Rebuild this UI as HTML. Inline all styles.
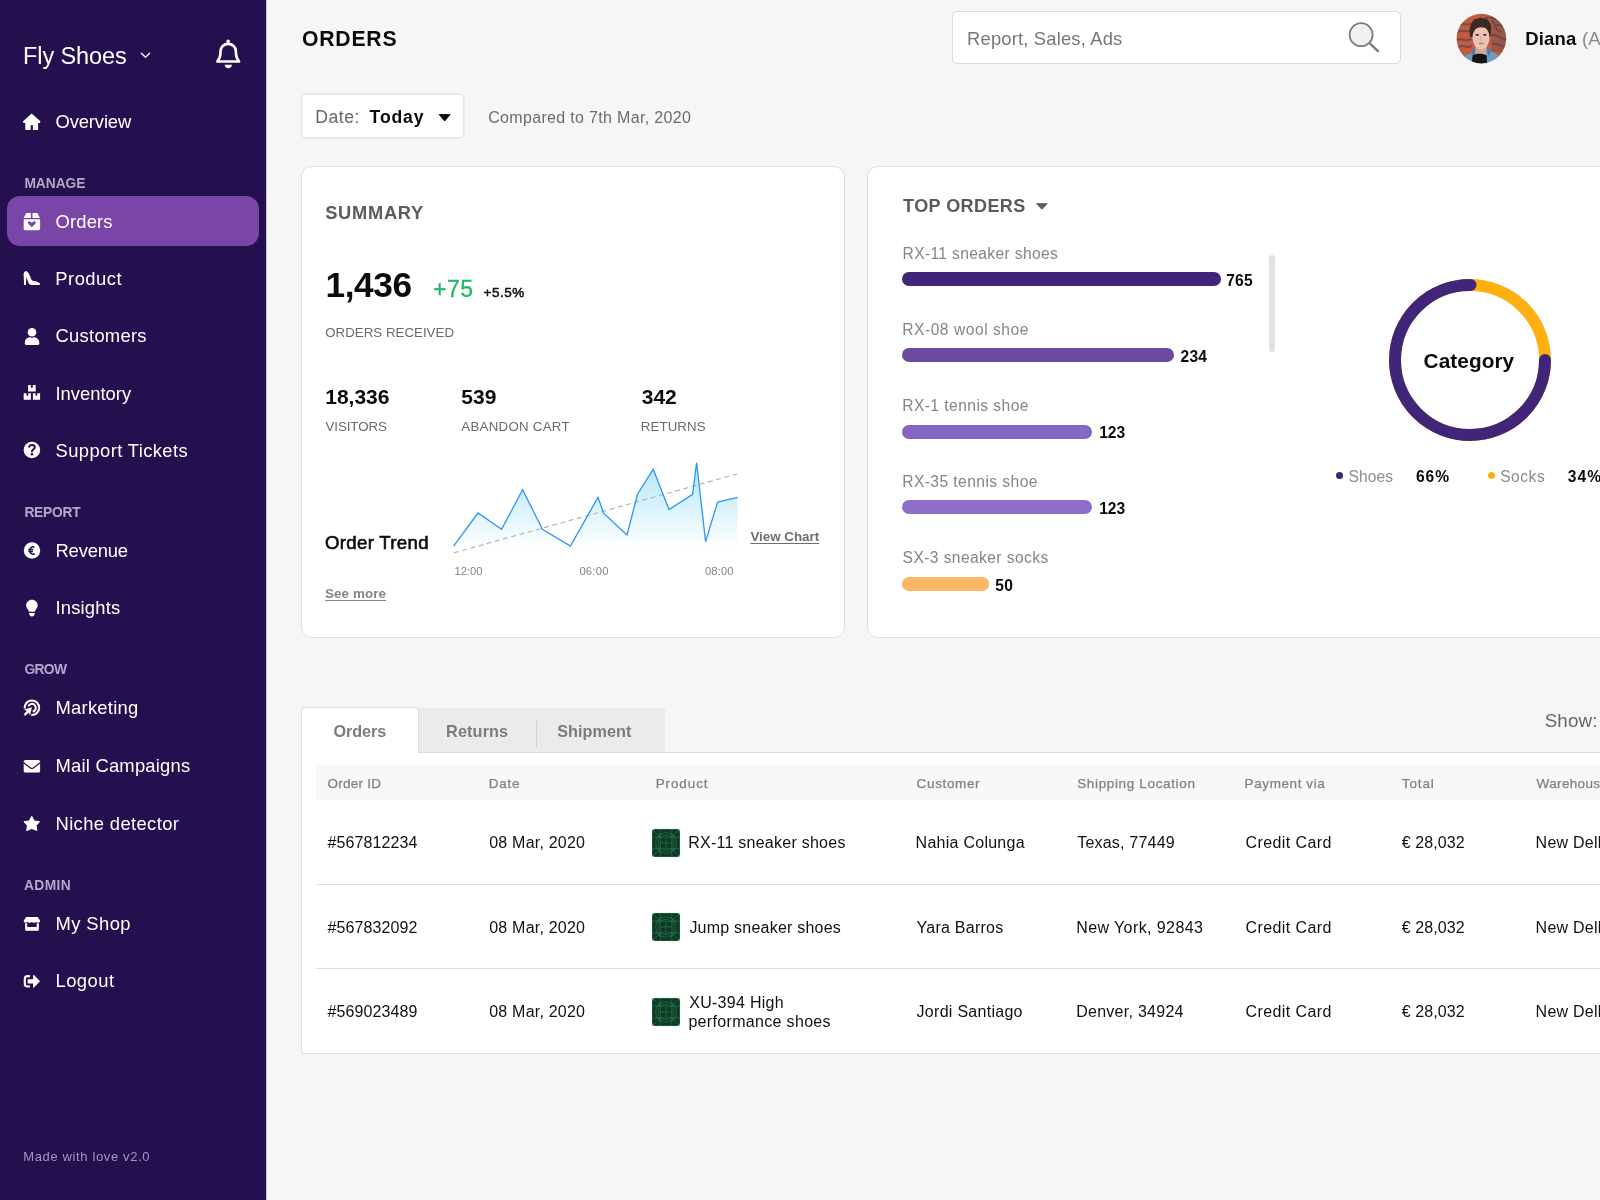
<!DOCTYPE html>
<html>
<head>
<meta charset="utf-8">
<title>Orders</title>
<style>
*{box-sizing:border-box;margin:0;padding:0}
html,body{width:1600px;height:1200px;overflow:hidden}
body{background:#f5f7f6;font-family:"Liberation Sans",sans-serif;color:#111;position:relative}
.a{position:absolute;white-space:nowrap}
.card{position:absolute;background:#fff;border:1px solid #e0e0e0;border-radius:11px}
svg{position:absolute}
</style>
</head>
<body>
<!-- SIDEBAR -->
<div class="a" style="left:0;top:0;width:266px;height:1200px;background:#25104f"></div><div class="a" style="left:266px;top:0;width:1px;height:1200px;background:#25104f;opacity:.22"></div>
<div class="a" style="left:7px;top:196px;width:252px;height:50px;border-radius:13px;background:#7946a8"></div>
<svg style="left:0;top:0" width="266" height="1200" viewBox="0 0 266 1200" fill="#fff">
<!-- chevron -->
<path d="M141.300 53.200L145.500 57.300L149.700 53.200" fill="none" stroke="#fff" stroke-width="1.300" stroke-linecap="round" stroke-linejoin="round"/>
<!-- bell -->
<path d="M217.300 61.500C219 59.500 220.400 57.500 220.500 53L220.500 51.500C220.500 47 224 43.900 228.200 43.900C232.400 43.900 235.900 47 235.900 51.500L235.900 53C236 57.500 237.400 59.500 239.100 61.500Z" fill="none" stroke="#fff" stroke-width="2.600" stroke-linejoin="round"/>
<circle cx="228.200" cy="41.300" r="1.800"/>
<path d="M224.600 64.800C224.900 67 226.300 68.300 228.300 68.300C230.300 68.300 231.700 67 232 64.800Z"/>
<!-- home -->
<path d="M31.700 113.600L40.400 121.300L40 123L38.100 123L38.100 130L32.900 130L32.900 125.300L30.700 125.300L30.700 130L25.300 130L25.300 123L23.400 123L23 121.300Z"/>
<!-- orders box -->
<path d="M26.300 213L30.900 213L30.900 218.100L23.700 218.100ZM32.500 213L37.300 213L40 218.100L32.500 218.100Z"/>
<path d="M23.700 219.200H40.100V229C40.100 229.700 39.600 230.200 38.900 230.200H24.900C24.200 230.200 23.700 229.700 23.700 229Z"/>
<path d="M31.800 227.300L28.300 223.800C27.200 222.300 28.600 220.800 30.100 221.400C30.900 221.700 31.400 222.300 31.800 222.900C32.200 222.300 32.700 221.700 33.500 221.400C35 220.800 36.400 222.300 35.300 223.800Z" fill="#7946a8"/>
<!-- heel -->
<path d="M26.100 270.900C27.500 271.400 28.600 272.900 29.300 274.500L31.300 279.300C31.800 280.400 32.600 280.800 34 280.900C36.500 281.100 38.600 282.200 40.200 283.500C40.300 284.300 39.800 284.900 39 284.900L31.500 284.900C30 284.900 29 284.100 28.400 282.700L26.300 276.900L25.900 285L24.100 285L23.600 273.700C23.900 272.300 25 271.200 26.100 270.900Z"/>
<!-- user -->
<circle cx="32" cy="332.300" r="4.300"/>
<path d="M24.800 342.800C24.800 339.500 27 337.200 30 337.200C30.600 337.200 31.200 337.900 32 337.900C32.800 337.900 33.400 337.200 34 337.200C37 337.200 39.300 339.500 39.300 342.800L39.300 343.600C39.300 344.400 38.700 345 37.900 345L26.200 345C25.400 345 24.800 344.400 24.800 343.600Z"/>
<!-- boxes -->
<path d="M28.100 385.100H30.900V387.700H32.800V385.100H35.700V391.400H28.100Z"/>
<path d="M23.700 393.300H26.500V395.700H28.200V393.300H30.900V399.800H23.700Z"/>
<path d="M32.900 393.300H35.600V395.700H37.300V393.300H40.100V399.800H32.900Z"/>
<!-- question -->
<circle cx="31.900" cy="450" r="8.300"/>
<path d="M29.100 446.700C29.700 445.600 30.700 445.100 32 445.100C33.600 445.100 34.800 446.100 34.800 447.500C34.800 449.300 31.900 449.500 31.900 451.500" fill="none" stroke="#25104f" stroke-width="2" stroke-linecap="round"/>
<circle cx="31.900" cy="454.200" r="1.300" fill="#25104f"/>
<!-- euro -->
<circle cx="32" cy="550.500" r="8.200"/>
<path d="M34.500 547.300C32 546 29.900 547.600 29.900 550.500C29.900 553.400 32 555 34.700 553.700M28.300 549.500H33.300M28.300 551.500H32.900" fill="none" stroke="#25104f" stroke-width="1.500"/>
<!-- bulb -->
<path d="M31.900 599.700C35.100 599.700 37.700 602.200 37.700 605.300C37.700 607.800 35.600 609.300 34.700 611.800L29.100 611.800C28.200 609.300 26.100 607.800 26.100 605.300C26.100 602.200 28.700 599.700 31.900 599.700Z"/>
<path d="M29.100 613.100H34.700C34.700 615.300 33.500 616.600 31.900 616.600C30.300 616.600 29.100 615.300 29.100 613.100Z"/>
<!-- bullseye -->
<path d="M24.660 708.500A7.250 7.250 0 1 1 31.300 715" fill="none" stroke="#fff" stroke-width="2.100"/>
<path d="M28.300 706.300A3.900 3.900 0 1 1 32.700 711.600" fill="none" stroke="#fff" stroke-width="2"/>
<path d="M32 707.200L24.200 709.500L26.800 711L23.600 714.200L25.300 715.900L28.500 712.700L30 715.300Z"/>
<!-- mail -->
<rect x="23.700" y="759.900" width="16.400" height="12.700" rx="1.700"/>
<path d="M23.200 762.500L30.600 768C31.500 768.600 32.300 768.600 33.200 768L40.600 762.500" fill="none" stroke="#25104f" stroke-width="1.300"/>
<!-- star -->
<path d="M31.750 816.300L34.200 820.900L39.500 821.700L36.100 825.600L36.800 830.500L31.750 828.500L26.700 830.500L27.400 825.600L24 821.700L29.300 820.900Z" stroke="#fff" stroke-width="1" stroke-linejoin="round"/>
<!-- shop -->
<path d="M26.100 917H37.800L40.100 920.800C40.100 922 39.300 922.800 38.200 922.800C37.300 922.800 36.600 922.300 36.200 921.700C35.800 922.300 35.100 922.800 34.100 922.800C33.100 922.800 32.300 922.300 31.900 921.700C31.500 922.300 30.700 922.800 29.700 922.800C28.700 922.800 28 922.300 27.600 921.700C27.200 922.300 26.500 922.800 25.600 922.800C24.500 922.800 23.700 922 23.700 920.800Z"/>
<path d="M25.100 923.300H27.200V927H36.700V923.300H38.900V929.600C38.900 930.200 38.400 930.700 37.800 930.700H26.200C25.600 930.700 25.100 930.200 25.100 929.600Z"/>
<!-- logout -->
<path d="M30 976.100H27.500C26 976.100 24.800 977.300 24.800 978.800V983.800C24.800 985.300 26 986.500 27.500 986.500H30" fill="none" stroke="#fff" stroke-width="2.100" stroke-linecap="butt"/>
<path d="M27.700 979.200H33.100V975.400C33.100 974.900 33.600 974.700 34 975.100L40.100 981.300L34 987.600C33.600 988 33.100 987.800 33.100 987.300V983.600H27.700Z"/>
</svg>

<!-- HEADER -->
<div class="a" style="left:952px;top:11px;width:449px;height:53px;background:#fff;border:1px solid #dcdcdc;border-radius:5px"></div>
<svg class="a" style="left:1345px;top:20px" width="40" height="36" viewBox="0 0 40 36"><path d="M24.300 22.800L33.700 31.800" stroke="#7b7b7b" stroke-width="2.300"/><circle cx="16.100" cy="14.700" r="11.500" fill="#f0f0f0" stroke="#7b7b7b" stroke-width="1.800"/></svg>

<svg class="a" style="left:1456px;top:13px" width="51" height="51" viewBox="0 0 51 51">
<defs><clipPath id="av"><circle cx="25.400" cy="25.600" r="24.800"/></clipPath><filter id="bl" x="-10%" y="-10%" width="120%" height="120%"><feGaussianBlur stdDeviation=".55"/></filter></defs>
<g clip-path="url(#av)"><g filter="url(#bl)">
<rect x="-2" y="-2" width="55" height="55" fill="#c05c43"/>
<rect x="35" y="3" width="18" height="36" fill="#7d5249" opacity=".55"/>
<g fill="none" stroke="#5b4744" stroke-width="2" opacity=".75" stroke-linecap="round">
<path d="M2 19C7 15 11 21 15 17M1 27C6 24 10 30 15 26M3 34C8 31 11 36 15 33M5 12C9 9 12 13 15 11"/>
<path d="M36 8C41 12 38 17 45 19M36 22C42 20 44 28 50 26M37 31C41 29 45 35 49 33M39 13C43 9 46 15 50 13M30 5C34 3 37 7 41 5"/>
</g>
<path d="M14 24C12.500 13 16 5.500 22 5.500C23 4.500 26 4.800 27.500 5.500C33 5 36 11 35 19L34.300 24Z" fill="#3a2925"/>
<path d="M5 52C5.500 44 10 41.500 16 40L18 33.500L24.500 42L32 34L34.500 38C40 39.500 45 43 46 52Z" fill="#6c9cc0"/>
<path d="M16 40L18 33.500L20 36L17.500 42ZM32 34L34.500 38L33 44L30.500 37Z" fill="#4f7c9f"/>
<rect x="19.500" y="33" width="11" height="9" fill="#d9a893"/>
<path d="M15.800 52L16.500 42.500C19 40.200 28 40.200 30.700 42.500L31.200 52Z" fill="#161618"/>
<ellipse cx="25" cy="24.600" rx="8.500" ry="11.800" fill="#ebc3b3"/>
<path d="M16.500 22C15.500 13 19 9.500 24 10C29 9 34 12.500 33.600 21C32.500 16.500 29.500 14 26 14.500C21.500 13.500 18 16.500 16.500 22Z" fill="#3a2925"/>
<ellipse cx="21.200" cy="21.800" rx="2" ry=".9" fill="#3b2b2b"/><ellipse cx="28.800" cy="21.800" rx="2" ry=".9" fill="#3b2b2b"/>
<path d="M24.500 22.500L24 27.300L26 27.300" fill="none" stroke="#d3a08f" stroke-width=".8"/>
<ellipse cx="25.300" cy="30.400" rx="2.800" ry="1" fill="#c48378"/>
</g></g></svg>


<!-- DATE FILTER -->
<svg style="left:299px;top:91px" width="170" height="50" viewBox="299 91 170 50"><rect x="301.750" y="94" width="162.150" height="44" rx="4.500" fill="#fff" stroke="#dadada" stroke-width="1"/></svg>
<svg style="left:436px;top:112px" width="18" height="12" viewBox="436 112 18 12"><path d="M439.300 114.600H450L444.650 121Z" fill="#0b0b0b" stroke="#0b0b0b" stroke-width="1" stroke-linejoin="round"/></svg>

<!-- SUMMARY CARD -->
<div class="card" style="left:301px;top:166px;width:543.700px;height:472px"></div>
<svg class="a" style="left:440px;top:450px" width="320" height="110" viewBox="440 450 320 110">
<defs><linearGradient id="cg" x1="0" y1="0" x2="0" y2="1"><stop offset="0" stop-color="#b2e5f9"/><stop offset="1" stop-color="#ffffff"/></linearGradient></defs>
<path d="M453.6 546.2L478 513L501.6 529.4L522.6 489.6L542.4 529.4L570.4 546L598 497.4L603.6 513.2L627 535L637.6 494L653.2 469.2L669 509.6L692.6 494.4L696.6 462.6L705.6 541.6L717.6 502L737.6 497.4L737.6 548L453.6 548Z" fill="url(#cg)"/>
<path d="M454 552.8L737 474" stroke="#b0b0b0" stroke-width="1.100" stroke-dasharray="5 3.5" fill="none"/>
<path d="M453.6 546.2L478 513L501.6 529.4L522.6 489.6L542.4 529.4L570.4 546L598 497.4L603.6 513.2L627 535L637.6 494L653.2 469.2L669 509.6L692.6 494.4L696.6 462.6L705.6 541.6L717.6 502L737.6 497.4" stroke="#2d96f3" stroke-width="1.3" fill="none" stroke-linejoin="miter"/>
</svg>

<!-- TOP ORDERS CARD -->
<div class="card" style="left:867px;top:166px;width:800px;height:472px"></div>
<svg style="left:1034px;top:201px" width="16" height="12" viewBox="1034 201 16 12"><path d="M1036.600 203.700H1047.200L1041.900 209.300Z" fill="#5e5e5e" stroke="#5e5e5e" stroke-width="1" stroke-linejoin="round"/></svg>
<div class="a" style="left:902px;top:272px;width:319.3px;height:14px;border-radius:7px;background:#402579"></div>
<div class="a" style="left:902px;top:348.4px;width:272.3px;height:14px;border-radius:7px;background:#6b4ba0"></div>
<div class="a" style="left:902px;top:424.6px;width:190.4px;height:14px;border-radius:7px;background:#8566c3"></div>
<div class="a" style="left:902px;top:500.4px;width:190.4px;height:14px;border-radius:7px;background:#8d6fcb"></div>
<div class="a" style="left:902px;top:576.6px;width:87.3px;height:14px;border-radius:7px;background:#fbb766"></div>
<div class="a" style="left:1268.500px;top:255px;width:6.200px;height:97px;border-radius:3.100px;background:#e2e2e2"></div>
<svg class="a" style="left:1378.500px;top:268.700px" width="182" height="182" viewBox="-91 -91 182 182">
<circle cx="0" cy="0" r="75" fill="none" stroke="#fdb00f" stroke-width="12"/>
<path d="M75 0A75 75 0 1 1 0.500 -75" fill="none" stroke="#402579" stroke-width="12" stroke-linecap="round"/>
</svg>
<div class="a" style="left:1336.200px;top:472.100px;width:7px;height:7px;border-radius:50%;background:#402579"></div>
<div class="a" style="left:1487.800px;top:472.100px;width:7px;height:7px;border-radius:50%;background:#fdb014"></div>

<!-- TABLE -->
<div class="a" style="left:301px;top:752px;width:1400px;height:302px;background:#fff;border:1px solid #dfdfdf;border-top:none;border-radius:0 0 0 3px"></div>
<div class="a" style="left:301px;top:752px;width:1400px;height:1px;background:#dcdcdc"></div>
<div class="a" style="left:418px;top:708px;width:246.500px;height:44px;background:#ebebeb"></div>
<div class="a" style="left:301px;top:707px;width:118px;height:46px;background:#fff;border:1px solid #dfdfdf;border-bottom:none;border-radius:4px 4px 0 0"></div>
<div class="a" style="left:536px;top:721px;width:1px;height:27px;background:#d2d2d2"></div>
<div class="a" style="left:315.500px;top:765px;width:1300px;height:35px;background:#f8f8f8"></div>
<div class="a" style="left:315.500px;top:883.500px;width:1300px;height:1px;background:#dedede"></div>
<div class="a" style="left:315.500px;top:968px;width:1300px;height:1px;background:#dedede"></div>
<svg class="a" style="left:651px;top:827.5px" width="30" height="30" viewBox="-15 -15 30 30"><rect x="-14" y="-14" width="28" height="28" rx="3.200" fill="#0f3a1e"/><g fill="none" stroke="#48b5ab" stroke-width=".5" opacity=".6"><rect x="-13.750" y="-13.750" width="27.500" height="27.500" rx="3"/><circle r="10.300"/><circle r="7.800"/><path d="M-14 -14L-5.800 -5.800M14 -14L5.800 -5.800M-14 14L-5.800 5.800M14 14L5.800 5.800M-5.800 -14V14M5.800 -14V14M-14 -5.800H14M-14 5.800H14M0 -5.800V5.800M-5.800 0H5.800M-10.300 -4.300L-4.300 -10.300M10.300 -4.300L4.300 -10.300M-10.300 4.300L-4.300 10.300M10.300 4.300L4.300 10.300"/></g></svg><svg class="a" style="left:651px;top:912px" width="30" height="30" viewBox="-15 -15 30 30"><rect x="-14" y="-14" width="28" height="28" rx="3.200" fill="#0f3a1e"/><g fill="none" stroke="#48b5ab" stroke-width=".5" opacity=".6"><rect x="-13.750" y="-13.750" width="27.500" height="27.500" rx="3"/><circle r="10.300"/><circle r="7.800"/><path d="M-14 -14L-5.800 -5.800M14 -14L5.800 -5.800M-14 14L-5.800 5.800M14 14L5.800 5.800M-5.800 -14V14M5.800 -14V14M-14 -5.800H14M-14 5.800H14M0 -5.800V5.800M-5.800 0H5.800M-10.300 -4.300L-4.300 -10.300M10.300 -4.300L4.300 -10.300M-10.300 4.300L-4.300 10.300M10.300 4.300L4.300 10.300"/></g></svg><svg class="a" style="left:651px;top:996.5px" width="30" height="30" viewBox="-15 -15 30 30"><rect x="-14" y="-14" width="28" height="28" rx="3.200" fill="#0f3a1e"/><g fill="none" stroke="#48b5ab" stroke-width=".5" opacity=".6"><rect x="-13.750" y="-13.750" width="27.500" height="27.500" rx="3"/><circle r="10.300"/><circle r="7.800"/><path d="M-14 -14L-5.800 -5.800M14 -14L5.800 -5.800M-14 14L-5.800 5.800M14 14L5.800 5.800M-5.800 -14V14M5.800 -14V14M-14 -5.800H14M-14 5.800H14M0 -5.800V5.800M-5.800 0H5.800M-10.300 -4.300L-4.300 -10.300M10.300 -4.300L4.300 -10.300M-10.300 4.300L-4.300 10.300M10.300 4.300L4.300 10.300"/></g></svg>

<!-- TEXT -->
<div style="position:absolute;left:0;top:0;width:1600px;height:1200px;will-change:transform">
<div class="a" style="left:23.10px;top:43px;font-size:23.5px;line-height:26px;color:#fff;letter-spacing:-0.117px">Fly Shoes</div>
<div class="a" style="left:55.60px;top:111px;font-size:18.4px;line-height:21px;color:#fff;letter-spacing:-0.152px">Overview</div>
<div class="a" style="left:55.60px;top:211px;font-size:18.4px;line-height:21px;color:#fff;letter-spacing:0.128px">Orders</div>
<div class="a" style="left:55.25px;top:268px;font-size:18.4px;line-height:21px;color:#fff;letter-spacing:0.497px">Product</div>
<div class="a" style="left:55.60px;top:325px;font-size:18.4px;line-height:21px;color:#fff;letter-spacing:0.242px">Customers</div>
<div class="a" style="left:55.50px;top:383px;font-size:18.4px;line-height:21px;color:#fff;letter-spacing:-0.006px">Inventory</div>
<div class="a" style="left:55.60px;top:440px;font-size:18.4px;line-height:21px;color:#fff;letter-spacing:0.376px">Support Tickets</div>
<div class="a" style="left:55.50px;top:540px;font-size:18.4px;line-height:21px;color:#fff;letter-spacing:-0.190px">Revenue</div>
<div class="a" style="left:55.50px;top:597px;font-size:18.4px;line-height:21px;color:#fff;letter-spacing:0.188px">Insights</div>
<div class="a" style="left:55.50px;top:697px;font-size:18.4px;line-height:21px;color:#fff;letter-spacing:0.248px">Marketing</div>
<div class="a" style="left:55.50px;top:755px;font-size:18.4px;line-height:21px;color:#fff;letter-spacing:0.219px">Mail Campaigns</div>
<div class="a" style="left:55.50px;top:813px;font-size:18.4px;line-height:21px;color:#fff;letter-spacing:0.369px">Niche detector</div>
<div class="a" style="left:55.50px;top:913px;font-size:18.4px;line-height:21px;color:#fff;letter-spacing:0.409px">My Shop</div>
<div class="a" style="left:55.50px;top:970px;font-size:18.4px;line-height:21px;color:#fff;letter-spacing:0.452px">Logout</div>
<div class="a" style="left:24.40px;top:176px;font-size:13.8px;line-height:15px;color:#b3a7cb;font-weight:bold;letter-spacing:-0.053px">MANAGE</div>
<div class="a" style="left:24.40px;top:505px;font-size:13.8px;line-height:15px;color:#b3a7cb;font-weight:bold;letter-spacing:-0.243px">REPORT</div>
<div class="a" style="left:24.40px;top:662px;font-size:13.8px;line-height:15px;color:#b3a7cb;font-weight:bold;letter-spacing:-0.609px">GROW</div>
<div class="a" style="left:24.00px;top:878px;font-size:13.8px;line-height:15px;color:#b3a7cb;font-weight:bold;letter-spacing:0.387px">ADMIN</div>
<div class="a" style="left:23.20px;top:1149px;font-size:13px;line-height:15px;color:#a396bf;letter-spacing:0.635px">Made with love v2.0</div>
<div class="a" style="left:301.90px;top:27px;font-size:21.2px;line-height:23px;color:#0b0b0b;font-weight:bold;letter-spacing:0.817px">ORDERS</div>
<div class="a" style="left:967.10px;top:28px;font-size:18.4px;line-height:21px;color:#777;letter-spacing:0.169px">Report, Sales, Ads</div>
<div class="a" style="left:1525.30px;top:28px;font-size:18.5px;line-height:21px;color:#0b0b0b;font-weight:bold;letter-spacing:0.153px">Diana</div>
<div class="a" style="left:1582.00px;top:28px;font-size:18.5px;line-height:21px;color:#8a8a8a">(Admin)</div>
<div class="a" style="left:315.25px;top:107px;font-size:17.6px;line-height:20px;color:#666;letter-spacing:0.522px">Date:</div>
<div class="a" style="left:369.60px;top:107px;font-size:17.6px;line-height:20px;color:#0b0b0b;font-weight:bold;letter-spacing:0.858px">Today</div>
<div class="a" style="left:488.20px;top:109px;font-size:16px;line-height:17px;color:#6b6b6b;letter-spacing:0.330px">Compared to 7th Mar, 2020</div>
<div class="a" style="left:325.20px;top:202px;font-size:18.3px;line-height:21px;color:#5c5c5c;font-weight:bold;letter-spacing:0.720px">SUMMARY</div>
<div class="a" style="left:325.60px;top:265px;font-size:35.3px;line-height:39px;color:#0b0b0b;font-weight:bold;letter-spacing:-0.474px">1,436</div>
<div class="a" style="left:433.10px;top:276px;font-size:23px;line-height:26px;color:#1fb864;letter-spacing:0.488px;-webkit-text-stroke:.3px #1fb864">+75</div>
<div class="a" style="left:483.60px;top:285px;font-size:13.5px;line-height:15px;color:#111;letter-spacing:0.487px;-webkit-text-stroke:.5px #111">+5.5%</div>
<div class="a" style="left:325.20px;top:325px;font-size:13.3px;line-height:15px;color:#6a6a6a;letter-spacing:0.017px">ORDERS RECEIVED</div>
<div class="a" style="left:325.25px;top:385px;font-size:21px;line-height:23px;color:#0b0b0b;font-weight:bold;letter-spacing:-0.010px">18,336</div>
<div class="a" style="left:461.25px;top:385px;font-size:21px;line-height:23px;color:#0b0b0b;font-weight:bold;letter-spacing:0.071px">539</div>
<div class="a" style="left:641.75px;top:385px;font-size:21px;line-height:23px;color:#0b0b0b;font-weight:bold;letter-spacing:-0.054px">342</div>
<div class="a" style="left:325.50px;top:419px;font-size:13.3px;line-height:15px;color:#6a6a6a;letter-spacing:-0.065px">VISITORS</div>
<div class="a" style="left:461.25px;top:419px;font-size:13.3px;line-height:15px;color:#6a6a6a;letter-spacing:0.270px">ABANDON CART</div>
<div class="a" style="left:640.75px;top:419px;font-size:13.3px;line-height:15px;color:#6a6a6a;letter-spacing:0.100px">RETURNS</div>
<div class="a" style="left:325.00px;top:532px;font-size:18.6px;line-height:21px;color:#0b0b0b;letter-spacing:0.326px;-webkit-text-stroke:.6px #0b0b0b">Order Trend</div>
<div class="a" style="left:454.40px;top:565px;font-size:11.2px;line-height:12px;color:#858585;letter-spacing:0.019px">12:00</div>
<div class="a" style="left:579.40px;top:565px;font-size:11.2px;line-height:12px;color:#858585;letter-spacing:0.256px">06:00</div>
<div class="a" style="left:704.90px;top:565px;font-size:11.2px;line-height:12px;color:#858585;letter-spacing:0.156px">08:00</div>
<div class="a" style="left:750.40px;top:529px;font-size:13.4px;line-height:15px;color:#6e6e6e;font-weight:bold;letter-spacing:-0.017px;text-decoration:underline;text-underline-offset:1.5px;text-decoration-thickness:1.2px">View Chart</div>
<div class="a" style="left:325.00px;top:586px;font-size:13.4px;line-height:15px;color:#858585;font-weight:bold;letter-spacing:0.108px;text-decoration:underline;text-underline-offset:1.5px;text-decoration-thickness:1.2px">See more</div>
<div class="a" style="left:903.10px;top:196px;font-size:18px;line-height:20px;color:#5a5a5a;font-weight:bold;letter-spacing:0.424px">TOP ORDERS</div>
<div class="a" style="left:902.50px;top:245px;font-size:15.6px;line-height:17px;color:#858585;letter-spacing:0.367px">RX-11 sneaker shoes</div>
<div class="a" style="left:902.20px;top:321px;font-size:15.6px;line-height:17px;color:#858585;letter-spacing:0.537px">RX-08 wool shoe</div>
<div class="a" style="left:902.20px;top:397px;font-size:15.6px;line-height:17px;color:#858585;letter-spacing:0.444px">RX-1 tennis shoe</div>
<div class="a" style="left:902.20px;top:473px;font-size:15.6px;line-height:17px;color:#858585;letter-spacing:0.436px">RX-35 tennis shoe</div>
<div class="a" style="left:902.60px;top:549px;font-size:15.6px;line-height:17px;color:#858585;letter-spacing:0.408px">SX-3 sneaker socks</div>
<div class="a" style="left:1226.25px;top:272px;font-size:15.6px;line-height:17px;color:#0b0b0b;font-weight:bold;letter-spacing:0.152px">765</div>
<div class="a" style="left:1180.60px;top:348px;font-size:15.6px;line-height:17px;color:#0b0b0b;font-weight:bold;letter-spacing:0.152px">234</div>
<div class="a" style="left:1099.30px;top:424px;font-size:15.6px;line-height:17px;color:#0b0b0b;font-weight:bold;letter-spacing:-0.123px">123</div>
<div class="a" style="left:1099.30px;top:500px;font-size:15.6px;line-height:17px;color:#0b0b0b;font-weight:bold;letter-spacing:-0.123px">123</div>
<div class="a" style="left:995.30px;top:577px;font-size:15.6px;line-height:17px;color:#0b0b0b;font-weight:bold;letter-spacing:0.227px">50</div>
<div class="a" style="left:1423.60px;top:349px;font-size:20.8px;line-height:23px;color:#0b0b0b;font-weight:bold;letter-spacing:0.060px">Category</div>
<div class="a" style="left:1348.50px;top:468px;font-size:15.6px;line-height:17px;color:#8c8c8c;letter-spacing:0.095px">Shoes</div>
<div class="a" style="left:1415.90px;top:468px;font-size:15.6px;line-height:17px;color:#0b0b0b;font-weight:bold;letter-spacing:1.027px">66%</div>
<div class="a" style="left:1500.20px;top:468px;font-size:15.6px;line-height:17px;color:#8c8c8c;letter-spacing:0.508px">Socks</div>
<div class="a" style="left:1567.80px;top:468px;font-size:15.6px;line-height:17px;color:#0b0b0b;font-weight:bold;letter-spacing:1.027px">34%</div>
<div class="a" style="left:333.50px;top:722px;font-size:16.2px;line-height:18px;color:#7c7c7c;font-weight:bold;letter-spacing:-0.076px">Orders</div>
<div class="a" style="left:446.10px;top:722px;font-size:16.2px;line-height:18px;color:#7c7c7c;font-weight:bold;letter-spacing:0.140px">Returns</div>
<div class="a" style="left:557.20px;top:722px;font-size:16.2px;line-height:18px;color:#7c7c7c;font-weight:bold;letter-spacing:0.049px">Shipment</div>
<div class="a" style="left:1544.70px;top:710px;font-size:18.8px;line-height:21px;color:#666;letter-spacing:0.130px">Show:</div>
<div class="a" style="left:327.50px;top:776px;font-size:13.5px;line-height:15px;color:#808080;letter-spacing:0.249px;-webkit-text-stroke:.25px #808080">Order ID</div>
<div class="a" style="left:488.75px;top:776px;font-size:13.5px;line-height:15px;color:#808080;letter-spacing:0.747px;-webkit-text-stroke:.25px #808080">Date</div>
<div class="a" style="left:655.70px;top:776px;font-size:13.5px;line-height:15px;color:#808080;letter-spacing:0.888px;-webkit-text-stroke:.25px #808080">Product</div>
<div class="a" style="left:916.60px;top:776px;font-size:13.5px;line-height:15px;color:#808080;letter-spacing:0.640px;-webkit-text-stroke:.25px #808080">Customer</div>
<div class="a" style="left:1077.20px;top:776px;font-size:13.5px;line-height:15px;color:#808080;letter-spacing:0.648px;-webkit-text-stroke:.25px #808080">Shipping Location</div>
<div class="a" style="left:1244.60px;top:776px;font-size:13.5px;line-height:15px;color:#808080;letter-spacing:0.593px;-webkit-text-stroke:.25px #808080">Payment via</div>
<div class="a" style="left:1401.80px;top:776px;font-size:13.5px;line-height:15px;color:#808080;letter-spacing:0.858px;-webkit-text-stroke:.25px #808080">Total</div>
<div class="a" style="left:1536.60px;top:776px;font-size:13.5px;line-height:15px;color:#808080;-webkit-text-stroke:.25px #808080;letter-spacing:.35px">Warehouse</div>
<div class="a" style="left:327.50px;top:834px;font-size:16px;line-height:17px;color:#111;letter-spacing:0.102px">#567812234</div>
<div class="a" style="left:489.20px;top:834px;font-size:16px;line-height:17px;color:#111;letter-spacing:0.218px">08 Mar, 2020</div>
<div class="a" style="left:915.60px;top:834px;font-size:16px;line-height:17px;color:#111;letter-spacing:0.262px">Nahia Colunga</div>
<div class="a" style="left:1077.20px;top:834px;font-size:16px;line-height:17px;color:#111;letter-spacing:0.206px">Texas, 77449</div>
<div class="a" style="left:1245.60px;top:834px;font-size:16px;line-height:17px;color:#111;letter-spacing:0.399px">Credit Card</div>
<div class="a" style="left:1401.80px;top:834px;font-size:16px;line-height:17px;color:#111;letter-spacing:0.088px">€ 28,032</div>
<div class="a" style="left:1535.60px;top:834px;font-size:16px;line-height:17px;color:#111;letter-spacing:.25px">New Delhi</div>
<div class="a" style="left:327.50px;top:919px;font-size:16px;line-height:17px;color:#111;letter-spacing:0.102px">#567832092</div>
<div class="a" style="left:489.20px;top:919px;font-size:16px;line-height:17px;color:#111;letter-spacing:0.218px">08 Mar, 2020</div>
<div class="a" style="left:916.60px;top:919px;font-size:16px;line-height:17px;color:#111;letter-spacing:0.242px">Yara Barros</div>
<div class="a" style="left:1076.20px;top:919px;font-size:16px;line-height:17px;color:#111;letter-spacing:0.409px">New York, 92843</div>
<div class="a" style="left:1245.60px;top:919px;font-size:16px;line-height:17px;color:#111;letter-spacing:0.399px">Credit Card</div>
<div class="a" style="left:1401.80px;top:919px;font-size:16px;line-height:17px;color:#111;letter-spacing:0.088px">€ 28,032</div>
<div class="a" style="left:1535.60px;top:919px;font-size:16px;line-height:17px;color:#111;letter-spacing:.25px">New Delhi</div>
<div class="a" style="left:327.50px;top:1003px;font-size:16px;line-height:17px;color:#111;letter-spacing:0.102px">#569023489</div>
<div class="a" style="left:489.20px;top:1003px;font-size:16px;line-height:17px;color:#111;letter-spacing:0.218px">08 Mar, 2020</div>
<div class="a" style="left:916.60px;top:1003px;font-size:16px;line-height:17px;color:#111;letter-spacing:0.278px">Jordi Santiago</div>
<div class="a" style="left:1076.20px;top:1003px;font-size:16px;line-height:17px;color:#111;letter-spacing:0.268px">Denver, 34924</div>
<div class="a" style="left:1245.60px;top:1003px;font-size:16px;line-height:17px;color:#111;letter-spacing:0.399px">Credit Card</div>
<div class="a" style="left:1401.80px;top:1003px;font-size:16px;line-height:17px;color:#111;letter-spacing:0.088px">€ 28,032</div>
<div class="a" style="left:1535.60px;top:1003px;font-size:16px;line-height:17px;color:#111;letter-spacing:.25px">New Delhi</div>
<div class="a" style="left:688.20px;top:834px;font-size:16px;line-height:17px;color:#111;letter-spacing:0.252px">RX-11 sneaker shoes</div>
<div class="a" style="left:689.40px;top:919px;font-size:16px;line-height:17px;color:#111;letter-spacing:0.222px">Jump sneaker shoes</div>
<div class="a" style="left:689.20px;top:994px;font-size:16px;line-height:17px;color:#111;letter-spacing:0.290px">XU-394 High</div>
<div class="a" style="left:688.40px;top:1013px;font-size:16px;line-height:17px;color:#111;letter-spacing:0.327px">performance shoes</div>
</div>
</body>
</html>
